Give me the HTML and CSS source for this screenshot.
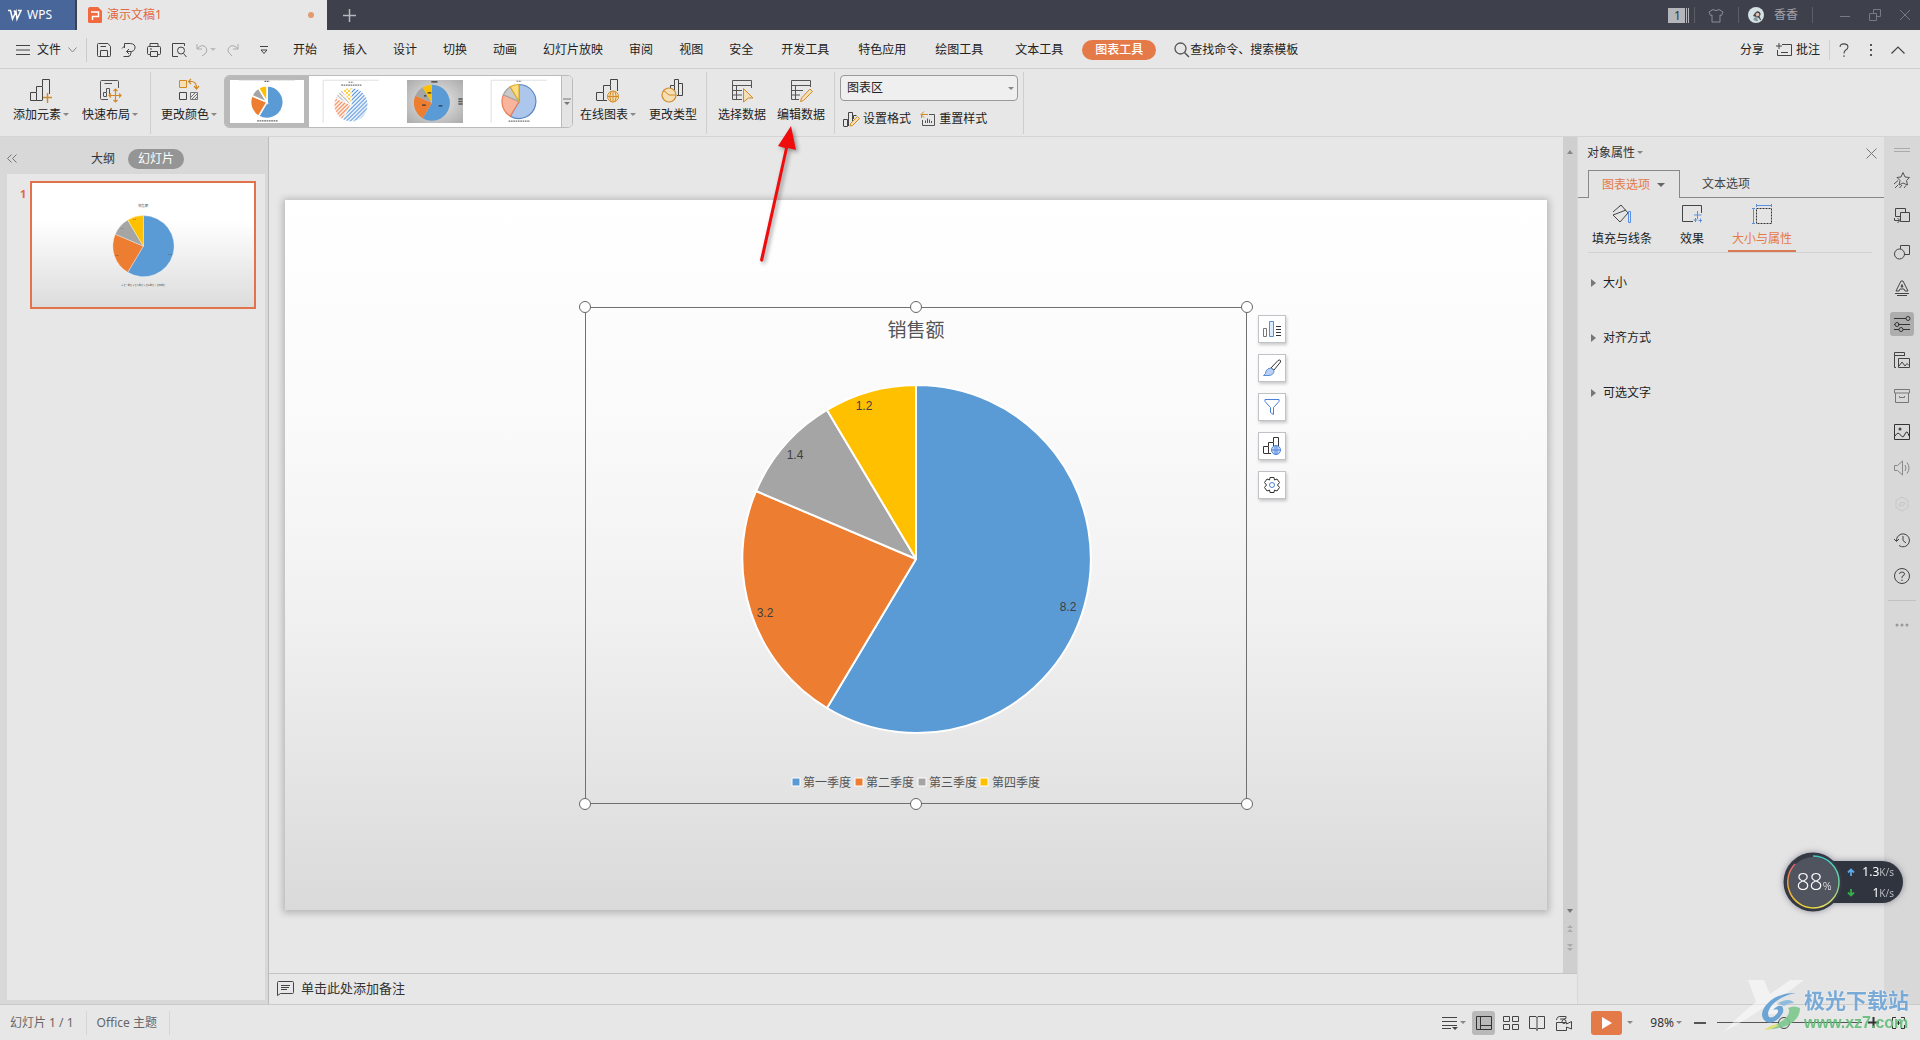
FILE: index.html
```html
<!DOCTYPE html>
<html lang="zh-CN">
<head>
<meta charset="utf-8">
<title>演示文稿1 - WPS</title>
<link rel="stylesheet" href="styles.css">
</head>
<body>
<svg class="defs" aria-hidden="true">
  <defs>
    <linearGradient id="ring" x1="0" y1="0" x2="0" y2="1"><stop offset="0" stop-color="#45c4c4"/><stop offset=".5" stop-color="#6fd0a0"/><stop offset="1" stop-color="#e8d95a"/></linearGradient>
    <linearGradient id="ring2" x1="0" y1="0" x2="0" y2="1"><stop offset="0" stop-color="#e0607a"/><stop offset=".4" stop-color="#f09a3c"/><stop offset="1" stop-color="#e8d23c"/></linearGradient>
    <pattern id="hb" width="5" height="5" patternUnits="userSpaceOnUse" patternTransform="scale(8)"><rect width="5" height="5" fill="#fff"/><path d="M-1 6L6-1M-1 1L1-1M4 6L6 4" stroke="#3d84d8" stroke-width="1.3"/></pattern>
    <pattern id="ho" width="5" height="5" patternUnits="userSpaceOnUse" patternTransform="scale(8)"><rect width="5" height="5" fill="#fff"/><path d="M-1 6L6-1M-1 1L1-1M4 6L6 4" stroke="#ee6a2a" stroke-width="1.3"/></pattern>
    <pattern id="hg" width="5" height="5" patternUnits="userSpaceOnUse" patternTransform="scale(8)"><rect width="5" height="5" fill="#fff"/><path d="M-1 -1L6 6" stroke="#aaa" stroke-width="1.3"/></pattern>
    <pattern id="hy" width="5" height="5" patternUnits="userSpaceOnUse" patternTransform="scale(8)"><rect width="5" height="5" fill="#fff"/><path d="M-1 -1L6 6M-1 6L6-1" stroke="#ffc000" stroke-width="1"/></pattern>
  </defs>
</svg>

<header class="titlebar">
  <button class="wps"><svg width="15" height="12" viewBox="0 0 15 12"><path d="M1 1.500H3.500L5.500 10L9 2.500L10 10L14 1.500H11M7 1.500L8.500 4" fill="none" stroke="#fff" stroke-width="1.500"/></svg>WPS</button>
  <div class="doc-tab">
    <svg width="14" height="16" viewBox="0 0 14 16"><path d="M2 0H10L14 4V14.500Q14 16 12.500 16H1.500Q0 16 0 14.500V2Q0 0 2 0Z" fill="#f0693f"/><path d="M3 5H10.500V9.500H4.500V13" fill="none" stroke="#fff" stroke-width="1.500"/></svg>
    <span>演示文稿1</span><i class="dot"></i>
  </div>
  <button class="new-tab" aria-label="新建"><svg width="13" height="13"><path d="M6.500 0V13M0 6.500H13" stroke="#b6b8bd" stroke-width="1.500"/></svg></button>
  <div class="title-right">
    <span class="badge">1</span>
    <i class="vbar"></i>
    <svg class="shirt" width="16" height="15" viewBox="0 0 16 15"><path d="M5 1.500Q8 4 11 1.500L15 4L13.500 7.500L12 7V14H4V7L2.500 7.500L1 4Z" fill="none" stroke="#8b8e96"/></svg>
    <i class="vbar"></i>
    <svg width="16" height="16" viewBox="0 0 16 16"><circle cx="8" cy="8" r="8" fill="#d5e2e4"/><path d="M5 9Q8 3 11 4.500Q14 7 11.500 9L13 13Q12 14 11 11Q8 10 5 9Z" fill="#45454d"/><path d="M5 12L9 9L10 14Q7 15 5 12Z" fill="#8b98a0"/><circle cx="9.500" cy="7.500" r="1.800" fill="#e5bfae"/></svg>
    <span class="user">香香</span>
    <i class="vbar"></i>
    <button class="win" aria-label="最小化"><svg width="12" height="12"><path d="M1 7.500H11" stroke="#777a82"/></svg></button>
    <button class="win" aria-label="还原"><svg width="12" height="12"><path d="M.5 4.500H7.500V11.500H.5ZM4.500 4V.500H11.500V7.500H8" fill="none" stroke="#777a82"/></svg></button>
    <button class="win" aria-label="关闭"><svg width="12" height="12"><path d="M1 1L11 11M11 1L1 11" stroke="#777a82"/></svg></button>
  </div>
</header>

<nav class="menubar">
  <button class="file"><svg width="14" height="10"><path d="M0 .5H14M0 5H14M0 9.500H14" stroke="#444"/></svg>文件<svg width="9" height="6"><path d="M.5 .5L4.500 5L8.500 .5" fill="none" stroke="#888"/></svg></button>
  <div class="quick">
    <button aria-label="保存"><svg width="16" height="16" viewBox="0 0 16 16"><path d="M1.500 2.500V13.500Q1.500 14.500 2.500 14.500H13.500Q14.500 14.500 14.500 13.500V4.500L12 1.500H2.500Q1.500 1.500 1.500 2.500ZM4.500 14V8.500H11.500V14M4.500 4.500H10" fill="none" stroke="#444"/></svg></button>
    <button aria-label="输出"><svg width="16" height="16" viewBox="0 0 16 16"><path d="M3.500 6V1.500H9.500Q14.500 2 14 6Q13.500 10 8 9.500H5.500M8 14.500H2.500M10 9.500V11Q10 14.500 6.500 14.500M8 7L5.500 9.500L8 12M3.500 4L1 6.500" fill="none" stroke="#444"/></svg></button>
    <button aria-label="打印"><svg width="16" height="16" viewBox="0 0 16 16"><path d="M4 4.500V1.500H12V4.500M4 12.500H2.500Q1.500 12.500 1.500 11.500V5.500Q1.500 4.500 2.500 4.500H13.500Q14.500 4.500 14.500 5.500V11.500Q14.500 12.500 13.500 12.500H12M4.500 9.500H11.500V14.500H4.500ZM4 7H6" fill="none" stroke="#444"/></svg></button>
    <button aria-label="打印预览"><svg width="16" height="16" viewBox="0 0 16 16"><path d="M7 14.500H1.500V1.500H13.500V4M12.500 11.500L15.500 15" fill="none" stroke="#444"/><circle cx="10" cy="8.500" r="3.500" fill="none" stroke="#444"/></svg></button>
    <button class="undo" aria-label="撤消"><svg width="12" height="14" viewBox="0 0 12 14"><path d="M1 1V6H6M1 6Q5 1 9 3.500Q12.500 7 9 11L6 13" fill="none" stroke="#aaa"/></svg><i class="caret pale"></i></button>
    <button aria-label="重做"><svg width="14" height="14" viewBox="0 0 14 14"><path d="M13 1V6H8M13 6Q9 1 5 3.500Q1 7 5 11L7 13" fill="none" stroke="#aaa"/></svg></button>
    <button class="more" aria-label="更多"><svg width="8" height="10"><path d="M0 1.500H8M1 5L4 8.500L7 5Z" fill="none" stroke="#444"/></svg></button>
  </div>
  <div class="tabs">
    <button>开始</button><button>插入</button><button>设计</button><button>切换</button><button>动画</button><button>幻灯片放映</button><button>审阅</button><button>视图</button><button>安全</button><button class="wide">开发工具</button><button class="wide">特色应用</button><button class="wide">绘图工具</button><button class="ctx">文本工具</button><button class="active">图表工具</button>
  </div>
  <label class="search"><svg width="16" height="16"><circle cx="6.500" cy="6.500" r="5.500" fill="none" stroke="#555" stroke-width="1.300"/><path d="M10.500 10.500L15 15" stroke="#555" stroke-width="1.500"/></svg><input type="text" aria-label="搜索" value="查找命令、搜索模板"></label>
  <div class="menu-right">
    <button>分享</button>
    <button class="note"><svg width="16" height="14" viewBox="0 0 16 14"><path d="M6 1.500H15.500V12.500H1.500V7M5 9.500H12M3 0V6M0 3H6" fill="none" stroke="#444"/></svg>批注</button>
    <i class="vsep"></i>
    <button class="sq" aria-label="帮助"><svg width="12" height="14" viewBox="0 0 12 16"><path d="M1.500 4.500Q1.500 1 6 1T10.500 4.500Q10.500 6.500 8 8Q6 9.500 6 12M6 14V16" fill="none" stroke="#444" stroke-width="1.200"/></svg></button>
    <button class="sq" aria-label="选项"><svg width="4" height="14"><path d="M1 1H3V3H1ZM1 6H3V8H1ZM1 11H3V13H1Z" fill="#555"/></svg></button>
    <button class="sq" aria-label="折叠功能区"><svg width="14" height="8"><path d="M.5 7.500L7 1L13.500 7.500" fill="none" stroke="#444" stroke-width="1.200"/></svg></button>
  </div>
</nav>

<section class="ribbon">
  <div class="group g1">
    <button class="tool"><svg width="24" height="24" viewBox="1 0 24 24"><path d="M2.500 22V14.500H8.500V22.500H2.500V22M8.500 14V8.500H14.500V22M14.500 8V1.500H21.500V16M8.500 22.500H14.500" fill="none" stroke="#444"/><path d="M19.500 15V25M15 19.500H24" stroke="#d28a28" stroke-width="1.500"/></svg><span>添加元素<i class="caret"></i></span></button>
    <button class="tool"><svg width="24" height="24" viewBox="1 0 24 24"><path d="M11 21.500H4.500Q3.500 21.500 3.500 20.500V3.500Q3.500 2.500 4.500 2.500H20.500Q21.500 2.500 21.500 3.500V10M7.500 5.500H15M6.500 18V14.500H9.500V18.500H6.500M9.500 14V10.500H12.500V16" fill="none" stroke="#555"/><path d="M18.500 11.500V23.500M12.500 17.500H24M16.500 13L18.500 11L20.500 13M16.500 22L18.500 24L20.500 22M14 15.500L12 17.500L14 19.500M22 15.500L24 17.500L22 19.500" fill="none" stroke="#d28a28" stroke-width="1.200"/></svg><span>快速布局<i class="caret"></i></span></button>
  </div>
  <div class="group g2">
    <button class="tool"><svg width="24" height="24" viewBox="1 0 24 24"><path d="M3.500 2.500H10.500V9.500H3.500Z" fill="#f5dfb5" stroke="#d28a28"/><path d="M3.500 14.500H10.500V21.500H3.500Z" fill="none" stroke="#444"/><path d="M14.500 14.500H21.500V21.500H14.500ZM15 19L19 15M15 22L22 15M18 22L22 18" fill="none" stroke="#777"/><path d="M13 3.500H16Q20.500 4 20.500 10M18 8L20.500 11L23 8M15 1L12.500 3.500L15 6" fill="none" stroke="#d28a28" stroke-width="1.200"/></svg><span>更改颜色<i class="caret"></i></span></button>
    <div class="gallery">
      <button class="style selected" aria-label="样式 1"><svg viewBox="-227 -175 454 350"><path d="M-227-173H227" stroke="#ccc" stroke-width="5"/><g transform="translate(0 5) scale(.77)" stroke="#fff" stroke-width="16"><path d="M0 0V-173A173 173 0 1 1-89 149Z" fill="#5b9bd5"/><path d="M0 0L-89 149A173 173 0 0 1-159-68Z" fill="#ed7d31"/><path d="M0 0L-159-68A173 173 0 0 1-89-149Z" fill="#a5a5a5"/><path d="M0 0L-89-149A173 173 0 0 1 0-173Z" fill="#ffc000"/></g><path d="M-20-163H20M-80 158H90" stroke="#666" stroke-width="10" stroke-dasharray="14 5"/></svg></button>
      <button class="style" aria-label="样式 2"><svg viewBox="-227 -175 454 350"><path d="M-227 175V-173H227" fill="none" stroke="#ccc" stroke-width="5"/><g transform="translate(0 26) scale(.8)" stroke="#fff" stroke-width="8"><path d="M0 0V-173A173 173 0 1 1-89 149Z" fill="url(#hb)"/><path d="M0 0L-89 149A173 173 0 0 1-159-68Z" fill="url(#ho)"/><path d="M0 0L-159-68A173 173 0 0 1-89-149Z" fill="url(#hg)"/><path d="M0 0L-89-149A173 173 0 0 1 0-173Z" fill="url(#hy)"/></g><path d="M-20-157H20M-80-133H85" stroke="#777" stroke-width="9" stroke-dasharray="14 5"/></svg></button>
      <button class="style dark" aria-label="样式 3"><svg viewBox="-227 -175 454 350"><g transform="translate(-25 10) scale(.85)"><path d="M0 0V-173A173 173 0 1 1-89 149Z" fill="#5b9bd5"/><path d="M0 0L-89 149A173 173 0 0 1-159-68Z" fill="#ed7d31"/><path d="M0 0L-159-68A173 173 0 0 1-89-149Z" fill="#a5a5a5"/><path d="M0 0L-89-149A173 173 0 0 1 0-173Z" fill="#ffc000"/></g><path d="M-30-160H20M30 36H60M-105 30H-75M-90-45H-70M-60-70H-30" stroke="#333" stroke-width="10"/><path d="M190-20H225M190 0H225M190 20H225" stroke="#555" stroke-width="11"/></svg></button>
      <button class="style" aria-label="样式 4"><svg viewBox="-227 -175 454 350"><path d="M-227 175V-173H227" fill="none" stroke="#ccc" stroke-width="5"/><g transform="scale(.8)" stroke-width="12"><path d="M0 0V-173A173 173 0 1 1-89 149Z" fill="#adc6ec" stroke="#5b86c0"/><path d="M0 0L-89 149A173 173 0 0 1-159-68Z" fill="#f8b59c" stroke="#ed7d5b"/><path d="M0 0L-159-68A173 173 0 0 1-89-149Z" fill="#c9c9c9" stroke="#a5a5a5"/><path d="M0 0L-89-149A173 173 0 0 1 0-173Z" fill="#ffdc80" stroke="#d9ac2c"/></g><path d="M-20-165H20M-85 160H90" stroke="#777" stroke-width="9" stroke-dasharray="14 5"/></svg></button>
      <button class="expand" aria-label="更多样式"><svg width="8" height="8"><path d="M0 1H8" stroke="#777"/><path d="M1 4H7L4 7Z" fill="#777"/></svg></button>
    </div>
    <div class="pair">
      <button class="tool"><svg width="24" height="24" viewBox="1 0 24 24"><path d="M1.500 22V14.500H8.500V22.500H1.500M8.500 14V7.500H15.500V12M15.500 7V1.500H22.500V13M8.500 22.500H12" fill="none" stroke="#444"/><circle cx="18" cy="18.500" r="5.500" fill="#f5dfb5" stroke="#d28a28"/><path d="M12.500 18.500H23.500M18 13V24M16 13.500Q13.500 18.500 16 23.500M20 13.500Q22.500 18.500 20 23.500" fill="none" stroke="#d28a28"/></svg><span>在线图表<i class="caret"></i></span></button>
      <button class="tool"><svg width="24" height="24" viewBox="1 0 24 24"><path d="M10.500 10V7.500H14.500V12M14.500 7V1.500H18.500V17.500H17M18.500 5.500H22.500V17.500H18.500" fill="none" stroke="#444"/><circle cx="9" cy="17" r="7" fill="#f5dfb5" stroke="#d28a28" stroke-width="1.200"/><path d="M3 12L9 17H16" fill="none" stroke="#d28a28"/></svg><span>更改类型</span></button>
    </div>
  </div>
  <div class="group g3">
    <button class="tool"><svg width="24" height="24" viewBox="0 0 24 24"><path d="M12 21.500H2.500V2.500H21.500V10M2.500 7.500H21.500M2.500 12.500H12M2.500 17H12M6.500 7.500V21" fill="none" stroke="#555"/><path d="M13.500 10.500L23 20L18.500 20L13.500 24Z" fill="#f5dfb5" stroke="#d28a28"/></svg><span>选择数据</span></button>
    <button class="tool"><svg width="24" height="24" viewBox="0 0 24 24"><path d="M10 21.500H2.500V2.500H21.500V9M2.500 7.500H21.500M2.500 12.500H14M2.500 17H11M6.500 7.500V21" fill="none" stroke="#555"/><path d="M21 11L23.500 13.500L14.500 22.500L11.500 23.500L12.500 20Z" fill="#f5dfb5" stroke="#d28a28"/></svg><span>编辑数据</span></button>
  </div>
  <div class="group g4">
    <div class="select-box"><select aria-label="图表元素"><option>图表区</option></select><i class="caret"></i></div>
    <div class="small-row">
      <button class="small"><svg width="18" height="18" viewBox="0 0 18 18"><path d="M1.500 16V9.500H5.500V16.500H1.500M6.500 16V2.500H10.500V11M11.500 9V5.500H14.500" fill="none" stroke="#444"/><path d="M15.500 6.500L17.500 8.500L10.500 15.500L8 16L8.500 13.500Z" fill="#f5dfb5" stroke="#d28a28"/></svg>设置格式</button>
      <button class="small"><svg width="16" height="16" viewBox="0 0 16 16"><path d="M9 3.500H14.500V14.500H2.500V9M5.500 12V9.500M7.500 12V7.500M9.500 12V8.500M11.500 12V10" fill="none" stroke="#555"/><path d="M1.500 7V3.500H8M4 .5L1 3.500L4 6.500" fill="none" stroke="#d28a28"/></svg>重置样式</button>
    </div>
  </div>
</section>

<main class="work">
  <aside class="slides">
    <div class="slides-head">
      <button class="collapse" aria-label="收起"><svg width="10" height="9"><path d="M4.500 .5L.5 4.500L4.500 8.500M9.500 .5L5.500 4.500L9.500 8.500" fill="none" stroke="#777"/></svg></button>
      <button>大纲</button><button class="on">幻灯片</button>
    </div>
    <div class="slide-list">
      <span class="num">1</span>
      <div class="thumb"><svg viewBox="0 0 1262 704" aria-label="幻灯片 1"><use href="#sales" x="302" y="107"/></svg></div>
    </div>
  </aside>

  <section class="stage">
    <div class="canvas">
      <div class="slide">
        <div class="chart">
          <svg class="chart-svg" width="662" height="497" viewBox="0 0 662 497">
            <g id="sales">
              <text x="331" y="30" class="chart-title">销售额</text>
              <g stroke="#fff" stroke-width="2" stroke-linejoin="round"><path d="M331 252V78A174 174 0 1 1 242 401Z" fill="#5b9bd5"/><path d="M331 252L242 401A174 174 0 0 1 171 184Z" fill="#ed7d31"/><path d="M331 252L171 184A174 174 0 0 1 242 103Z" fill="#a5a5a5"/><path d="M331 252L242 103A174 174 0 0 1 331 78Z" fill="#ffc000"/></g>
              <g class="val"><text x="483" y="304">8.2</text><text x="180" y="310">3.2</text><text x="210" y="152">1.4</text><text x="279" y="103">1.2</text></g>
              <g stroke="#fff" stroke-width="1"><path d="M207 471H215V479H207Z" fill="#5b9bd5"/><path d="M270 471H278V479H270Z" fill="#ed7d31"/><path d="M333 471H341V479H333Z" fill="#a5a5a5"/><path d="M395 471H403V479H395Z" fill="#ffc000"/></g>
              <g class="leg"><text x="218" y="480">第一季度</text><text x="281" y="480">第二季度</text><text x="344" y="480">第三季度</text><text x="407" y="480">第四季度</text></g>
            </g>
            <path d="M.5 .5H661.500V496.500H.5Z" fill="none" stroke="#6e7072"/>
            <g fill="#fff" stroke="#666"><circle cx="0" cy="0" r="5.500"/><circle cx="331" cy="0" r="5.500"/><circle cx="662" cy="0" r="5.500"/><circle cx="0" cy="497" r="5.500"/><circle cx="331" cy="497" r="5.500"/><circle cx="662" cy="497" r="5.500"/></g>
          </svg>
          <div class="chart-tools">
            <button aria-label="图表元素"><svg width="20" height="18" viewBox="0 0 20 18"><path d="M1.500 8.500H4.500V16.500H1.500Z" fill="none" stroke="#777"/><path d="M7.500 1.500H11.500V16.500H7.500Z" fill="#dcecff" stroke="#5a8fd6"/><path d="M14 6.500H19M14 9.500H19M14 12.500H19M14 15.500H19" stroke="#333"/></svg></button>
            <button aria-label="图表样式"><svg width="20" height="18" viewBox="0 0 20 18"><path d="M9 9L16 1.500Q19 0 18.500 3L12 11Z" fill="none" stroke="#333"/><path d="M9 9L12 11.500Q12 16 7 16.500H1.500Q4 15 4 12Q5.500 9 9 9Z" fill="#b9d0f5" stroke="#5a8fd6"/></svg></button>
            <button aria-label="图表筛选"><svg width="16" height="18" viewBox="0 0 16 18"><path d="M1 1.500H15V3.500L9.500 9.500V16.500L6.500 14.500V9.500L1 3.500Z" fill="none" stroke="#4a80d8"/></svg></button>
            <button aria-label="在线图表"><svg width="20" height="18" viewBox="0 0 20 18"><path d="M1.500 16V9.500H6.500V16.500H1.500M6.500 9V5.500H11.500V9M11.500 5V.500H16.500V9M6.500 16.500H9" fill="none" stroke="#333"/><circle cx="14" cy="13" r="4.500" fill="#cfe0fa" stroke="#4a80d8"/><path d="M9.500 13H18.500M14 8.500V17.500" fill="none" stroke="#4a80d8"/><ellipse cx="14" cy="13" rx="2" ry="4.500" fill="none" stroke="#4a80d8" stroke-width=".6"/></svg></button>
            <button aria-label="设置"><svg width="18" height="18" viewBox="0 0 18 18"><path d="M7 1.500H11L11.500 4L14 3L16.500 6.500L14.500 9L16.500 11.500L14 15L11.500 14L11 16.500H7L6.500 14L4 15L1.500 11.500L3.500 9L1.500 6.500L4 3L6.500 4Z" fill="none" stroke="#333" stroke-linejoin="round"/><circle cx="9" cy="9" r="2.500" fill="none" stroke="#4a80d8"/></svg></button>
          </div>
        </div>
      </div>
      <div class="scroll"><svg width="6" height="4"><path d="M0 4L3 0L6 4Z" fill="#888"/></svg><div class="scroll-end"><svg width="6" height="4"><path d="M0 0L3 4L6 0Z" fill="#777"/></svg><svg width="6" height="7"><path d="M0 3L3 0L6 3ZM0 7L3 4L6 7Z" fill="#aaa"/></svg><svg width="6" height="7"><path d="M0 0L3 3L6 0ZM0 4L3 7L6 4Z" fill="#aaa"/></svg></div></div>
    </div>
    <div class="notes"><svg width="17" height="15" viewBox="0 0 17 15"><path d="M1.500 .5H15.500Q16.500 .5 16.500 1.500V11.500Q16.500 12.500 15.500 12.500H3.500L.5 14.500V1.500Q.5 .5 1.500 .5ZM4 4.500H13M4 6.500H12M4 8.500H10" fill="none" stroke="#444"/></svg><span>单击此处添加备注</span></div>
  </section>

  <aside class="props">
    <div class="props-head"><button>对象属性<i class="caret"></i></button><button aria-label="关闭"><svg width="11" height="11"><path d="M.5 .5L10.500 10.500M10.500 .5L.5 10.500" stroke="#777"/></svg></button></div>
    <div class="props-tabs"><button class="on">图表选项<i class="caret big"></i></button><button>文本选项</button></div>
    <div class="props-kinds">
      <button><svg width="20" height="20" viewBox="0 0 20 20"><path d="M1 8L9 1L16 9L8 18L1 11L14 6M7 3L9 1" fill="none" stroke="#444"/><path d="M16.500 7.500H18.500V18.500H16.500Z" fill="#d5e5ff" stroke="#5a8fe0"/></svg>填充与线条</button>
      <button><svg width="20" height="20" viewBox="0 0 20 20"><path d="M11 17.500H.5V1.500H19.500V9" fill="none" stroke="#444"/><path d="M15.500 7V15M12 11H19.500M13.500 14V18M11.500 16H15.500M18.500 14.500V18.500M16.500 16.500H20" stroke="#5a8fe0"/></svg>效果</button>
      <button class="on"><svg width="20" height="20" viewBox="0 0 20 20"><path d="M4.500 4.500H19.500V19.500H4.500Z" fill="none" stroke="#333" stroke-dasharray="2 1"/><path d="M4 1.500H20M4.500 0V3M19.500 0V3M1.500 4V20M0 4.500H3M0 19.500H3" stroke="#5a8fe0"/></svg>大小与属性</button>
    </div>
    <div class="folds"><button><i></i>大小</button><button><i></i>对齐方式</button><button><i></i>可选文字</button></div>
  </aside>

  <aside class="dock">
    <svg class="grip" width="16" height="4"><path d="M0 .5H16M0 3.500H16" stroke="#aaa"/></svg>
    <button aria-label="动画"><svg width="18" height="18" viewBox="0 0 18 18"><path d="M10 1.500L12 6L16.500 6.500L13.500 9.500L14.500 14L10 12L6 14L7 9.500L4 6.500L8 6ZM5 9.500L1 13M5 14L2 17M9 14L6.500 17M13 14.500L11 17" fill="none" stroke="#555"/></svg></button>
    <button aria-label="切换"><svg width="18" height="18" viewBox="0 0 18 18"><path d="M7 9.500H2.500V1.500H12.500V5.500M7.500 5.500H16.500V14.500H7.500ZM1.500 11V13.500H6.500M4.500 11L7 13.500L4.500 16" fill="none" stroke="#444"/></svg></button>
    <button aria-label="形状"><svg width="18" height="18" viewBox="0 0 18 18"><circle cx="6.500" cy="11" r="5" fill="none" stroke="#444"/><path d="M7.500 6V2.500H16.500V11.500H11.500" fill="none" stroke="#444"/></svg></button>
    <button aria-label="艺术字"><svg width="18" height="18" viewBox="0 0 18 18"><path d="M3 12L8 2H10L15 12H12L11 10H7L6 12ZM8 8L9 5.500L10 8ZM2 14.500H16M4 16.500H14" fill="none" stroke="#444"/></svg></button>
    <button class="on" aria-label="对象属性"><svg width="18" height="18" viewBox="0 0 18 18"><path d="M1 3.500H13M5 9.500H17M1 9.500H2M1 14.500H6M10 14.500H17" stroke="#333"/><g fill="none" stroke="#333"><circle cx="15" cy="3.500" r="2"/><circle cx="4" cy="9.500" r="2"/><circle cx="8" cy="14.500" r="2"/></g></svg></button>
    <button aria-label="模板"><svg width="18" height="18" viewBox="0 0 18 18"><path d="M3 16.500H1.500V1.500H11.500V5M1.500 4.500H11M5.500 7.500H16.500V16.500H5.500ZM6 15L9 11L12 15L14 12.500L16 14.500" fill="none" stroke="#444"/></svg></button>
    <button aria-label="素材"><svg width="18" height="18" viewBox="0 0 18 18"><path d="M1.500 2.500H16.500V6H1.500ZM2.500 6V15.500H15.500V6M6.500 9V10.500H11.500V9" fill="none" stroke="#777"/></svg></button>
    <button aria-label="图片"><svg width="18" height="18" viewBox="0 0 18 18"><path d="M1.500 1.500H16.500V16.500H1.500ZM2 13Q5 8 7.500 12T12 11T16 13" fill="none" stroke="#333"/><circle cx="7" cy="6" r="1.500" fill="#444"/></svg></button>
    <button aria-label="音频"><svg width="18" height="18" viewBox="0 0 18 18"><path d="M1.500 6.500H4.500L9.500 2V16L4.500 11.500H1.500ZM12 6Q14 9 12 12M14 3.500Q18 9 14 14.500" fill="none" stroke="#888"/></svg></button>
    <button aria-label="限制"><svg width="18" height="18" viewBox="0 0 18 18"><path d="M9 2L15 5.500V12.500L9 16L3 12.500V5.500ZM6 11L8 7L12 8L10 11Z" fill="none" stroke="#c6c6c6"/></svg></button>
    <button aria-label="历史"><svg width="18" height="18" viewBox="0 0 18 18"><path d="M3.500 10A6.500 6.500 0 1 1 6 14.500M1 8L3.500 10.500L6 8M10 5V9.500L13 12" fill="none" stroke="#444"/></svg></button>
    <button aria-label="帮助"><svg width="18" height="18" viewBox="0 0 18 18"><circle cx="9" cy="9" r="7.500" fill="none" stroke="#444"/><path d="M6.500 7Q6.500 5 9 5T11.500 7Q11.500 8.500 9 9.500V11M9 12.500V14" fill="none" stroke="#444"/></svg></button>
    <hr>
    <button aria-label="更多"><svg width="14" height="4"><circle cx="2" cy="2" r="1.500" fill="#999"/><circle cx="7" cy="2" r="1.500" fill="#999"/><circle cx="12" cy="2" r="1.500" fill="#999"/></svg></button>
  </aside>
</main>

<footer class="status">
  <span class="cell">幻灯片 1 / 1</span><span class="cell">Office 主题</span>
  <div class="views">
    <button class="v" aria-label="备注"><svg width="16" height="14"><path d="M0 1.500H15M0 5.500H15M0 9.500H15M0 12.500H9" stroke="#444"/><path d="M10 11H16L13 14Z" fill="#444"/></svg><i class="caret"></i></button>
    <button class="v on" aria-label="普通视图"><svg width="16" height="14"><path d="M.5 .5H15.500V13.500H.5ZM4.500 .5V13.500M4.500 9.500H15.500" fill="none" stroke="#333"/></svg></button>
    <button class="v" aria-label="浏览视图"><svg width="16" height="14"><path d="M.5 .5H6.500V5.500H.5ZM9.500 .5H15.500V5.500H9.500ZM.5 8.500H6.500V13.500H.5ZM9.500 8.500H15.500V13.500H9.500Z" fill="none" stroke="#444"/></svg></button>
    <button class="v" aria-label="阅读视图"><svg width="16" height="16"><path d="M.5 1.500H7L8 2.500L9 1.500H15.500V13.500H9L8 14.500L7 13.500H.5ZM8 2V16" fill="none" stroke="#444"/></svg></button>
    <button class="v" aria-label="录制"><svg width="17" height="16"><path d="M1.500 7.500H11.500V9L16.500 6.500V14L11.500 12V15.500H1.500ZM1.500 5Q2 1 6 1.500H11Q12 4 9 4H5" fill="none" stroke="#444"/><circle cx="9" cy="6.500" r="2" fill="none" stroke="#444"/></svg></button>
  </div>
  <button class="play" aria-label="放映"><svg width="10" height="12"><path d="M0 0L10 6L0 12Z" fill="#fff"/></svg></button><i class="caret play-caret"></i>
  <button class="zoom">98%<i class="caret"></i></button>
  <button class="minus" aria-label="缩小"><svg width="12" height="2"><path d="M0 1H12" stroke="#555" stroke-width="2"/></svg></button>
  <input class="slider" type="range" min="0" max="100" value="46" aria-label="显示比例">
  <button class="plus" aria-label="放大"><svg width="11" height="11"><path d="M0 5.500H11M5.500 0V11" stroke="#333" stroke-width="2"/></svg></button>
  <button class="fit" aria-label="适应窗口"><svg width="13" height="12"><path d="M4 .5H.5V4M9 .5H12.500V4M.5 8V11.500H4M12.500 8V11.500H9M4 6H9M6.500 4V8" fill="none" stroke="#333"/></svg></button>
</footer>

<svg class="arrow" width="60" height="150" viewBox="0 0 60 150"><path d="M10 138L35 26L28 24L41 4L46 28L38 26L13 139Q11 141 10 138Z" fill="#f00c0c"/></svg>

<div class="meter">
  <div class="rates"><span><svg width="8" height="8"><path d="M4 8V1.500M1 4.500L4 1.500L7 4.500" fill="none" stroke="#5aa9ea" stroke-width="1.800"/></svg><em>1.3</em>K/s</span><span><svg width="8" height="8"><path d="M4 0V6.500M1 3.500L4 6.500L7 3.500" fill="none" stroke="#35b04a" stroke-width="1.800"/></svg><em>1</em>K/s</span></div>
  <div class="gauge"><svg width="60" height="60" viewBox="0 0 60 60"><circle cx="30" cy="30" r="29.500" fill="#353944"/><circle cx="30" cy="30" r="25" fill="#50545f"/><path d="M30 4A26 26 0 0 1 30 56" fill="none" stroke="url(#ring)" stroke-width="1.500"/><path d="M30 56A26 26 0 0 1 12 12" fill="none" stroke="url(#ring2)" stroke-width="1.500"/></svg><div class="pct">88<small>%</small></div></div>
</div>

<div class="mark">
  <svg class="haze" width="100" height="52" viewBox="0 0 100 52"><path d="M28 0H44L50 14L70 0H84Q68 12 56 22L62 34H48L43 28Q26 40 4 52Q18 36 36 22Z" fill="#fff" fill-opacity=".5"/></svg>
  <svg class="logo" width="44" height="40" viewBox="0 0 44 40"><path d="M36 1Q22 0 10 9Q-2 20 4 28Q9 34 18 27Q26 20 22 14Q17 13 13 18Q19 16 18 20Q14 27 9 25Q6 20 13 12Q23 3 36 1Z" fill="#5f9dd3"/><path d="M18 11Q30 5 34 11Q28 11 24 14Z" fill="#84b8df"/><path d="M28 16Q34 13 40 16Q40 28 26 34Q14 38 8 37Q20 31 26 26Q31 20 28 16Z" fill="#7cc88d"/><path d="M4 38Q14 31 19 33Q12 38 4 38Z" fill="#dfe070"/></svg>
  <div class="mark-text"><strong>极光下载站</strong><a href="#">www.xz7.com</a></div>
</div>
</body>
</html>
```
FILE: styles.css
```css
* { box-sizing: border-box; }
body {
  margin: 0;
  min-height: 100vh;
  display: flex;
  flex-direction: column;
  position: relative;
  background: #e7e7e7;
  color: #333;
  font: 12px/16px "Noto Sans", "Noto Sans CJK SC", sans-serif;
}
button, input, select {
  font: inherit;
  color: inherit;
  background: none;
  border: 0;
  padding: 0;
  margin: 0;
  white-space: nowrap;
}
svg { display: block; flex: none; overflow: visible; }
.defs { position: absolute; width: 0; height: 0; }
.caret {
  display: inline-block;
  flex: none;
  width: 6px;
  margin-left: 2px;
  border: solid transparent;
  border-width: 3px 3px 0;
  border-top-color: #888;
  vertical-align: 3px;
}
.caret.pale { border-top-color: #bbb; }
.caret.big { width: 8px; border-width: 4px 4px 0; border-top-color: #666; margin-left: 7px; }

/* title bar */
.titlebar { display: flex; height: 30px; background: #3e414b; }
.wps { display: flex; align-items: center; gap: 5px; width: 75px; padding-left: 7px; background: #48669a; color: #fff; }
.doc-tab { display: flex; align-items: center; gap: 5px; width: 250px; margin-left: 2px; padding: 0 13px 0 11px; background: #e7e7e7; color: #e2683f; }
.dot { width: 6px; height: 6px; margin-left: auto; border-radius: 50%; background: #e39a6c; }
.new-tab { padding: 0 16px; }
.title-right { display: flex; align-items: center; margin-left: auto; color: #a0a3aa; }
.badge { width: 22px; height: 15px; padding-left: 6px; line-height: 15px; color: #333; background: linear-gradient(90deg, #b4b6bb 17px, transparent 17px 18px, #b4b6bb 18px 19px, transparent 19px 20px, #b4b6bb 20px 21px, transparent 21px); }
.vbar { width: 1px; height: 16px; margin: 0 9px 0 4px; background: #5b5e67; }
.shirt { margin: 0 10px 0 4px; }
.user { margin: 0 10px; }
.win { display: grid; place-items: center; width: 30px; height: 30px; }
.win:first-of-type { margin-left: 8px; }

/* menu bar */
.menubar { display: flex; align-items: center; height: 39px; padding-top: 1px; border-bottom: 1px solid #cfcfcf; color: #222; }
.file { display: flex; align-items: center; gap: 7px; height: 24px; padding: 0 9px 0 16px; border-right: 1px solid #ccc; }
.quick { display: flex; align-items: center; gap: 9px; width: 193px; padding-left: 9px; }
.undo { display: flex; align-items: center; }
.more { margin-left: 12px; }
.tabs { display: flex; align-items: center; }
.tabs button { height: 20px; padding: 0 13px; }
.tabs .wide { padding: 0 14px 0 15px; }
.tabs .ctx { padding: 0 16px 0 18px; }
.tabs .active { margin: 0 18px 0 3px; border-radius: 10px; background: #e57a49; color: #fff; font-weight: 500; }
.search { display: flex; align-items: center; }
.search input { width: 120px; }
.menu-right { display: flex; align-items: center; margin-left: auto; padding-right: 9px; }
.note { display: flex; align-items: center; gap: 4px; margin: 0 9px 0 12px; }
.vsep { width: 1px; height: 20px; background: #d0d0d0; }
.sq { display: grid; place-items: center; width: 27px; height: 28px; }

/* ribbon */
.ribbon { display: flex; height: 68px; padding: 3px 0 2px 13px; border-bottom: 1px solid #d4d4d4; color: #222; }
.group { display: flex; align-items: flex-start; border-right: 1px solid #cecece; }
.g1 { gap: 13px; padding-right: 12px; }
.g2 { gap: 7px; padding: 0 9px 0 10px; }
.g3 { gap: 11px; padding: 0 9px 0 11px; }
.g4 { flex-direction: column; gap: 9px; padding: 3px 5px 0; }
.pair { display: flex; gap: 13px; }
.tool { display: flex; flex-direction: column; align-items: center; gap: 5px; padding-top: 6px; }
.gallery { display: flex; align-items: center; width: 349px; height: 53px; margin-top: 3px; border: 1px solid #bbb; border-radius: 5px; background: #fff; overflow: hidden; }
.style { display: flex; align-items: center; justify-content: center; width: 84px; height: 51px; }
.style svg { width: 56px; height: 43px; }
.style.selected { border: solid #b9b9b9; border-width: 4px 5px; }
.style.dark svg { background: radial-gradient(#eee, #aaa); }
.expand { display: grid; place-items: center; flex: 1; align-self: stretch; border-left: 1px solid #bbb; background: #e4e4e4; }
.select-box { position: relative; width: 178px; height: 26px; }
.select-box select { appearance: none; width: 100%; height: 26px; padding: 0 6px; border: 1px solid #999; border-radius: 4px; background: #efefef; }
.select-box .caret { position: absolute; right: 4px; top: 12px; }
.small-row { display: flex; gap: 9px; padding-left: 2px; }
.small { display: flex; align-items: center; gap: 3px; }

/* work area */
.work { display: flex; flex: 1; }
.slides { display: flex; flex-direction: column; width: 269px; padding: 0 3px 4px 7px; border-right: 1px solid #bbb; background: #d8d8d8; }
.slides-head { display: flex; align-items: center; height: 37px; padding-top: 6px; }
.slides-head .collapse { margin-right: 61px; }
.slides-head button:nth-child(2) { padding: 0 13px; }
.slides-head .on { height: 20px; padding: 0 10px; border-radius: 10px; background: #959595; color: #fff; }
.slide-list { display: flex; flex: 1; align-items: flex-start; justify-content: space-between; padding: 7px 9px 0 13px; background: #e7e7e7; }
.num { margin-top: 5px; color: #e2683f; font-weight: 700; font-size: 11px; }
.thumb { width: 226px; border: 2px solid #e2724a; background: linear-gradient(#fff 30%, #dcdcdc); }
.thumb svg { width: 100%; height: auto; }

.stage { display: flex; flex: 1; flex-direction: column; min-width: 0; }
.canvas { display: flex; flex: 1; align-items: center; border-bottom: 1px solid #c4c4c4; background: #e7e7e7; }
.slide { display: grid; place-items: center; flex: 1; aspect-ratio: 16 / 9; margin: 0 16px; background: linear-gradient(#fff, #fafafa 32%, #f1f1f1 58%, #dadada); box-shadow: 0 1px 7px 2px rgba(0, 0, 0, .22); }
.chart { position: relative; }
.chart-title { font-size: 19px; text-anchor: middle; fill: #555; }
.val { font: 12px "Liberation Sans", sans-serif; text-anchor: middle; fill: #404040; }
.leg { font-size: 12px; fill: #555; }
.chart-tools { position: absolute; left: 100%; top: 8px; display: flex; flex-direction: column; gap: 11px; margin-left: 11px; }
.chart-tools button { display: grid; place-items: center; width: 28px; height: 28px; border: 1px solid #bfc2c6; background: #fff; box-shadow: 1px 2px 3px rgba(0, 0, 0, .2); }
.scroll { display: flex; flex-direction: column; align-items: center; justify-content: space-between; align-self: stretch; width: 14px; padding: 13px 0 22px; background: #cfcfcf; }
.scroll-end { display: grid; gap: 12px; }
.notes { display: flex; align-items: center; gap: 7px; height: 30px; padding: 0 0 2px 8px; font-size: 13px; }

.props { width: 307px; border-left: 1px solid #d8d8d8; background: #e4e4e4; }
.props-head { display: flex; align-items: center; justify-content: space-between; padding: 8px 7px 9px 9px; }
.props-tabs { display: flex; height: 28px; padding-left: 10px; border-bottom: 1px solid #888; }
.props-tabs button { display: flex; align-items: center; width: 92px; height: 28px; padding-left: 13px; color: #444; }
.props-tabs button + button { padding-left: 22px; }
.props-tabs .on { border: solid #888; border-width: 1px 1px 0; background: #e4e4e4; color: #e57a49; }
.props-kinds { display: flex; margin: 6px 12px 0 10px; padding-left: 4px; border-bottom: 1px solid #d2d2d2; color: #222; }
.props-kinds button { display: flex; flex-direction: column; align-items: center; gap: 7px; height: 48px; margin-right: 28px; }
.props-kinds .on { margin: 0 0 -1px -4px; padding: 0 4px; border-bottom: 2px solid #d97a55; color: #e57a49; }
.folds { display: flex; flex-direction: column; align-items: flex-start; gap: 39px; padding: 22px 13px; color: #222; }
.folds button { display: flex; align-items: center; gap: 7px; }
.folds i { border: solid transparent; border-width: 4px 0 4px 5px; border-left-color: #777; }

.dock { display: flex; flex-direction: column; align-items: center; gap: 12px; width: 36px; padding-top: 11px; background: #d8d8d8; }
.dock button { display: grid; place-items: center; width: 24px; height: 24px; border-radius: 3px; }
.dock .on { background: #adadad; }
.dock hr { width: 28px; margin: 0; border: 0; border-top: 1px solid #c2c2c2; }
.dock .grip { margin-bottom: 4px; }

/* status bar */
.status { display: flex; align-items: center; height: 36px; padding-right: 15px; border-top: 1px solid #cacaca; background: #e7e7e7; }
.cell { padding: 4px 12px 4px 10px; border-right: 1px solid #d5d5d5; color: #666; word-spacing: 0; }
.views { display: flex; gap: 6px; margin-left: auto; }
.v { display: flex; align-items: center; justify-content: center; min-width: 20px; height: 24px; }
.v.on { width: 23px; border-radius: 3px; background: #b9b9b9; }
.play { display: grid; place-items: center; width: 31px; height: 24px; margin-left: 18px; border-radius: 3px; background: #e57a49; }
.play-caret { margin: 0 17px 0 5px; }
.zoom { margin-right: 12px; }
.slider { appearance: none; width: 145px; height: 12px; margin: 0 6px 0 11px; background: linear-gradient(#555, #555) center / 100% 1px no-repeat; }
.slider::-webkit-slider-thumb { appearance: none; width: 12px; height: 12px; border: 1px solid #444; border-radius: 50%; background: #dde6dc; }
.plus { margin-right: 13px; }

/* overlays */
.arrow { position: absolute; left: 750px; top: 122px; filter: drop-shadow(2px 2px 2px rgba(0, 0, 0, .4)); }
.meter { position: absolute; right: 17px; top: 852px; display: flex; flex-direction: row-reverse; align-items: center; filter: drop-shadow(0 0 3px rgba(60, 60, 90, .5)); }
.gauge { position: relative; }
.pct { position: absolute; left: 0; top: 0; width: 60px; padding-left: 2px; line-height: 58px; text-align: center; font-family: "Open Sans", sans-serif; font-weight: 300; font-size: 23px; color: #fff; }
.pct small { font-size: 11px; }
.rates { display: grid; align-content: space-around; width: 86px; height: 42px; margin-left: -26px; padding: 0 9px 0 30px; border-radius: 0 21px 21px 0; background: #30343e; color: #b5b8c0; font-size: 10px; }
.rates span { display: flex; align-items: center; }
.rates em { margin-left: auto; font-style: normal; font-size: 12px; color: #fff; }
.mark { position: absolute; right: 11px; bottom: 8px; display: flex; align-items: flex-end; pointer-events: none; }
.haze { margin-right: -60px; }
.logo { position: relative; opacity: .9; }
.mark-text { display: flex; flex-direction: column; font-family: "Liberation Sans", "Noto Sans CJK SC", sans-serif; opacity: .9; }
.mark-text strong { font-size: 21px; line-height: 26px; color: #6fa5d6; text-shadow: 0 0 2px #fff; }
.mark-text a { font-size: 16px; line-height: 18px; font-weight: 700; color: #62bd78; text-decoration: none; }
```
